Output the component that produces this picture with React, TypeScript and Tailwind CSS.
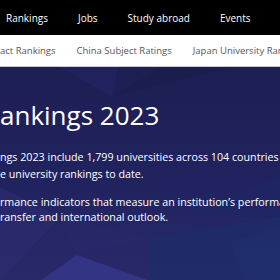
import React from 'react';

const topLinks = ['Rankings', 'Jobs', 'Study abroad', 'Events', 'Resources'];
const subLinks = ['act Rankings', 'China Subject Ratings', 'Japan University Rankings'];

const HeroBackground: React.FC = () => (
  <svg
    className="absolute inset-0 h-full w-full"
    viewBox="0 0 280 214"
    preserveAspectRatio="none"
    aria-hidden="true"
  >
    <defs>
      <linearGradient id="heroFade" x1="0" y1="0" x2="0" y2="1">
        <stop offset="0" stopColor="#1d1e52" />
        <stop offset="0.55" stopColor="#212360" />
        <stop offset="1" stopColor="#29296a" />
      </linearGradient>
    </defs>
    <rect width="280" height="214" fill="url(#heroFade)" />
    <polygon points="60,0 118,0 112,30" fill="#24266a" opacity="0.5" />
    <polygon points="112,30 160,0 230,0" fill="#1a1b4c" opacity="0.5" />
    <polygon points="0,120 60,150 0,214" fill="#2d2b70" opacity="0.6" />
    <polygon points="60,150 150,170 77,188" fill="#2b2a6c" opacity="0.45" />
    <polygon points="77,188 150,214 40,214" fill="#36368a" opacity="0.85" />
    <polygon points="150,170 280,150 280,214 150,214" fill="#1f2b6a" opacity="0.85" />
    <polygon points="180,150 280,110 280,150" fill="#1e2764" opacity="0.7" />
    <polygon points="230,175 280,160 280,214 245,214" fill="#223070" opacity="0.6" />
  </svg>
);

const App: React.FC = () => {
  return (
    <div className="h-[280px] w-[280px] overflow-hidden bg-[#1d1e52] font-['Open_Sans',sans-serif]">
      {/* Top navigation */}
      <nav className="flex h-[35px] items-center gap-[30px] whitespace-nowrap bg-black pt-[2px] pl-[6px] text-[10px] text-white [font-stretch:90%]">
        {topLinks.map((link) => (
          <span key={link}>{link}</span>
        ))}
      </nav>

      {/* Rankings sub navigation */}
      <div className="flex h-[32px] items-center gap-[21px] whitespace-nowrap border-b border-[#c9c9cf] bg-white pt-[2px] text-[9.5px] text-[#55565c] [font-stretch:90%]">
        {subLinks.map((link) => (
          <span key={link}>{link}</span>
        ))}
      </div>

      {/* Hero */}
      <section className="relative h-[214px]">
        <HeroBackground />
        <div className="relative whitespace-nowrap text-white">
          <h1 className="pt-[31px] text-[26px] leading-[34px] font-normal">ankings 2023</h1>
          <div className="mt-[17px] text-[10.7px] leading-[17px]">
            <p>ngs 2023 include 1,799 universities across 104 countries and regions</p>
            <p>e university rankings to date.</p>
          </div>
          <div className="mt-[12px] text-[10.7px] leading-[15px]">
            <p>rmance indicators that measure an institution’s performance across</p>
            <p>ransfer and international outlook.</p>
          </div>
        </div>
      </section>
    </div>
  );
};

export default App;
